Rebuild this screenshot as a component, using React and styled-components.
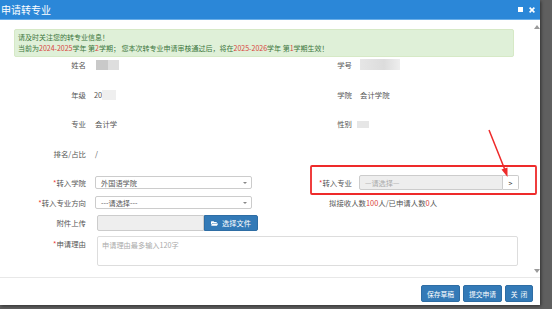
import React from "react";
import styled, { createGlobalStyle } from "styled-components";
import { FaFolderOpen } from "react-icons/fa";

const Global = createGlobalStyle`
  html, body { margin: 0; padding: 0; background: #5f5f5f; }
  body { width: 552px; height: 309px; overflow: hidden; font-family: "Noto Sans CJK SC", "Liberation Sans", sans-serif; }
  * { box-sizing: border-box; }
`;

const Dialog = styled.div`
  position: relative;
  width: 540px;
  height: 305px;
  background: #fff;
  display: flex;
  flex-direction: column;
  box-shadow: 1px 1px 3px rgba(0,0,0,0.5);
`;

const TitleBar = styled.div`
  height: 20px;
  flex: none;
  background: #2b87d8;
  border-bottom: 1px solid #6aaee8;
  display: flex;
  align-items: center;
  justify-content: space-between;
  padding: 0 5px 0 1px;
  color: #fff;
  font-size: 10px;
  line-height: 19px;
`;

const TitleIcons = styled.div`
  display: flex;
  align-items: center;
  gap: 6px;
`;

const MaxIcon = styled.span`
  width: 5px;
  height: 5px;
  background: #fff;
  display: block;
`;

const Body = styled.div`
  flex: 1;
  display: flex;
  min-height: 0;
`;

const Main = styled.div`
  flex: 1;
  display: flex;
  flex-direction: column;
`;

const ScrollTrack = styled.div`
  width: 8px;
  flex: none;
  display: flex;
  flex-direction: column;
  justify-content: space-between;
  align-items: center;
  padding: 5px 0 4px 1px;
`;

const Alert = styled.div`
  margin: 9px 18px 0 14px;
  height: 28px;
  background: #dff0d8;
  border: 1px solid #d6e9c6;
  border-radius: 2px;
  color: #3c763d;
  font-size: 7px;
  line-height: 11px;
  padding: 2px 3px;
`;

const Red = styled.span`
  color: #d9453c;
`;

const Grid = styled.div`
  display: grid;
  grid-template-columns: 86px 180px 86px 1fr;
  grid-template-rows: ${(p) => p.$rows || "none"};
  row-gap: ${(p) => p.$gap}px;
  margin-top: ${(p) => p.$top}px;
  font-size: 7.4px;
  color: #555;
`;

const Label = styled.div`
  text-align: right;
  line-height: 10px;
  align-self: ${(p) => (p.$top ? "start" : "center")};
  padding-top: ${(p) => (p.$top ? 3 : 0)}px;
  white-space: nowrap;
`;

const Star = styled.span`
  color: #e33;
`;

const Value = styled.div`
  padding-left: ${(p) => p.$pad ?? 9}px;
  line-height: 10px;
  display: flex;
  align-items: center;
  min-width: 0;
`;

const Blur = styled.span`
  display: inline-block;
  width: ${(p) => p.$w}px;
  height: ${(p) => p.$h || 10}px;
  background: ${(p) => p.$bg};
  filter: blur(0.6px);
`;

const Select = styled.div`
  width: 157px;
  height: 13px;
  border: 1px solid #ccc;
  border-radius: 2px;
  background: #fff;
  display: flex;
  align-items: center;
  justify-content: space-between;
  padding: 0 4px 0 5px;
  font-size: 7.2px;
  color: #555;
`;

const Caret = styled.span`
  width: 0;
  height: 0;
  border-left: 2px solid transparent;
  border-right: 2px solid transparent;
  border-top: 2.5px solid #888;
`;

const InputGroup = styled.div`
  display: flex;
  height: ${(p) => p.$h || 15}px;
`;

const GreyInput = styled.div`
  width: ${(p) => p.$w}px;
  height: 100%;
  background: #eee;
  border: 1px solid #ccc;
  border-radius: 2px 0 0 2px;
  display: flex;
  align-items: center;
  padding-left: 5px;
  font-size: 7.2px;
  color: #aaa;
`;

const ArrowBtn = styled.div`
  width: 16px;
  height: 100%;
  border: 1px solid #ccc;
  border-left: none;
  border-radius: 0 2px 2px 0;
  background: #fff;
  display: flex;
  align-items: center;
  justify-content: center;
  font-size: 7px;
  color: #333;
`;

const FileBtn = styled.div`
  width: 54px;
  height: 100%;
  background: #337ab7;
  border: 1px solid #2e6da4;
  border-radius: 0 2px 2px 0;
  color: #fff;
  display: flex;
  align-items: center;
  justify-content: center;
  gap: 4px;
  font-size: 7.2px;
`;

const Quota = styled.div`
  grid-column: 3 / 5;
  padding-left: 63px;
  line-height: 10px;
  align-self: center;
  font-size: 7.4px;
  color: #555;
`;

const TextArea = styled.div`
  grid-column: 2 / 5;
  margin: 0 14px 0 11px;
  height: 30px;
  border: 1px solid #ddd;
  border-radius: 2px;
  padding: 3px 4px;
  font-size: 7.2px;
  line-height: 10px;
  color: #aaa;
`;

const Footer = styled.div`
  flex: none;
  height: 28px;
  border-top: 1px solid #e8e8e8;
  display: flex;
  justify-content: flex-end;
  gap: 3px;
  padding: 7px 7px 0 0;
`;

const Button = styled.div`
  width: ${(p) => p.$w}px;
  height: 17px;
  background: #337ab7;
  border: 1px solid #2e6da4;
  border-radius: 2px;
  color: #fff;
  font-size: 6.8px;
  display: flex;
  align-items: center;
  justify-content: center;
  white-space: pre;
`;

const Annot = styled.svg`
  position: absolute;
  left: 0;
  top: 0;
  pointer-events: none;
`;

const ScrollArrow = ({ up }) => (
  <svg width="6" height="4" viewBox="0 0 6 4">
    <polygon points={up ? "0,4 6,4 3,0" : "0,0 6,0 3,4"} fill="#9a9a9a" />
  </svg>
);

export default function App() {
  return (
    <>
      <Global />
      <Dialog>
        <TitleBar>
          <span>申请转专业</span>
          <TitleIcons>
            <MaxIcon />
            <svg width="6" height="6" viewBox="0 0 6 6">
              <path d="M0.6 0.6 L5.4 5.4 M5.4 0.6 L0.6 5.4" stroke="#fff" strokeWidth="1.6" />
            </svg>
          </TitleIcons>
        </TitleBar>
        <Body>
          <Main>
            <Alert>
              <div>请及时关注您的转专业信息！</div>
              <div>
                当前为<Red>2024-2025</Red>学年 第<Red>2</Red>学期； 您本次转专业申请审核通过后，将在<Red>2025-2026</Red>学年 第<Red>1</Red>学期生效！
              </div>
            </Alert>
            <Grid $gap={19.5} $top={2}>
              <Label>姓名</Label>
              <Value $pad={10}>
                <Blur $w={12} $bg="#c9c9c9" />
                <Blur $w={11} $bg="#dedede" />
              </Value>
              <Label>学号</Label>
              <Value $pad={8}>
                <Blur $w={40} $h={11} $bg="linear-gradient(90deg,#e6e6e6,#dcdcdc 60%,#eeeeee)" />
              </Value>

              <Label>年级</Label>
              <Value $pad={8}>
                20<Blur $w={14} $bg="#efefef" />
              </Value>
              <Label>学院</Label>
              <Value $pad={8}>会计学院</Value>

              <Label>专业</Label>
              <Value $pad={9}>会计学</Value>
              <Label>性别</Label>
              <Value $pad={5}>
                <Blur $w={12} $h={7} $bg="#e6e6e6" />
              </Value>

              <Label>排名/占比</Label>
              <Value $pad={9}>/</Value>
              <div />
              <div />
            </Grid>
            <Grid $gap={5} $top={16.5} $rows="15px 15px 16px 30px">
              <Label><Star>*</Star>转入学院</Label>
              <Value $pad={9}>
                <Select>
                  <span>外国语学院</span>
                  <Caret />
                </Select>
              </Value>
              <Label><Star>*</Star>转入专业</Label>
              <Value $pad={7}>
                <InputGroup>
                  <GreyInput $w={144}>—请选择—</GreyInput>
                  <ArrowBtn>&gt;</ArrowBtn>
                </InputGroup>
              </Value>

              <Label><Star>*</Star>转入专业方向</Label>
              <Value $pad={9}>
                <Select>
                  <span>---请选择---</span>
                  <Caret />
                </Select>
              </Value>
              <Quota>
                拟接收人数<Red>100</Red>人/已申请人数<Red>0</Red>人
              </Quota>

              <Label>附件上传</Label>
              <Value $pad={11}>
                <InputGroup $h={16}>
                  <GreyInput $w={107} />
                  <FileBtn>
                    <FaFolderOpen size={7} />
                    <span>选择文件</span>
                  </FileBtn>
                </InputGroup>
              </Value>
              <div />
              <div />

              <Label $top><Star>*</Star>申请理由</Label>
              <TextArea>申请理由最多输入120字</TextArea>
            </Grid>
          </Main>
          <ScrollTrack>
            <ScrollArrow up />
            <ScrollArrow />
          </ScrollTrack>
        </Body>
        <Footer>
          <Button $w={39}>保存草稿</Button>
          <Button $w={39}>提交申请</Button>
          <Button $w={28}>{"关  闭"}</Button>
        </Footer>
        <Annot width="540" height="305">
          <rect x="311" y="166" width="225" height="28" fill="none" stroke="#ee2a2a" strokeWidth="1.8" rx="1" />
          <line x1="489" y1="130" x2="505" y2="170" stroke="#ee2a2a" strokeWidth="1.5" />
          <polygon points="507.5,177 501.5,169.5 507.5,167.5" fill="#ee2a2a" />
        </Annot>
      </Dialog>
    </>
  );
}
